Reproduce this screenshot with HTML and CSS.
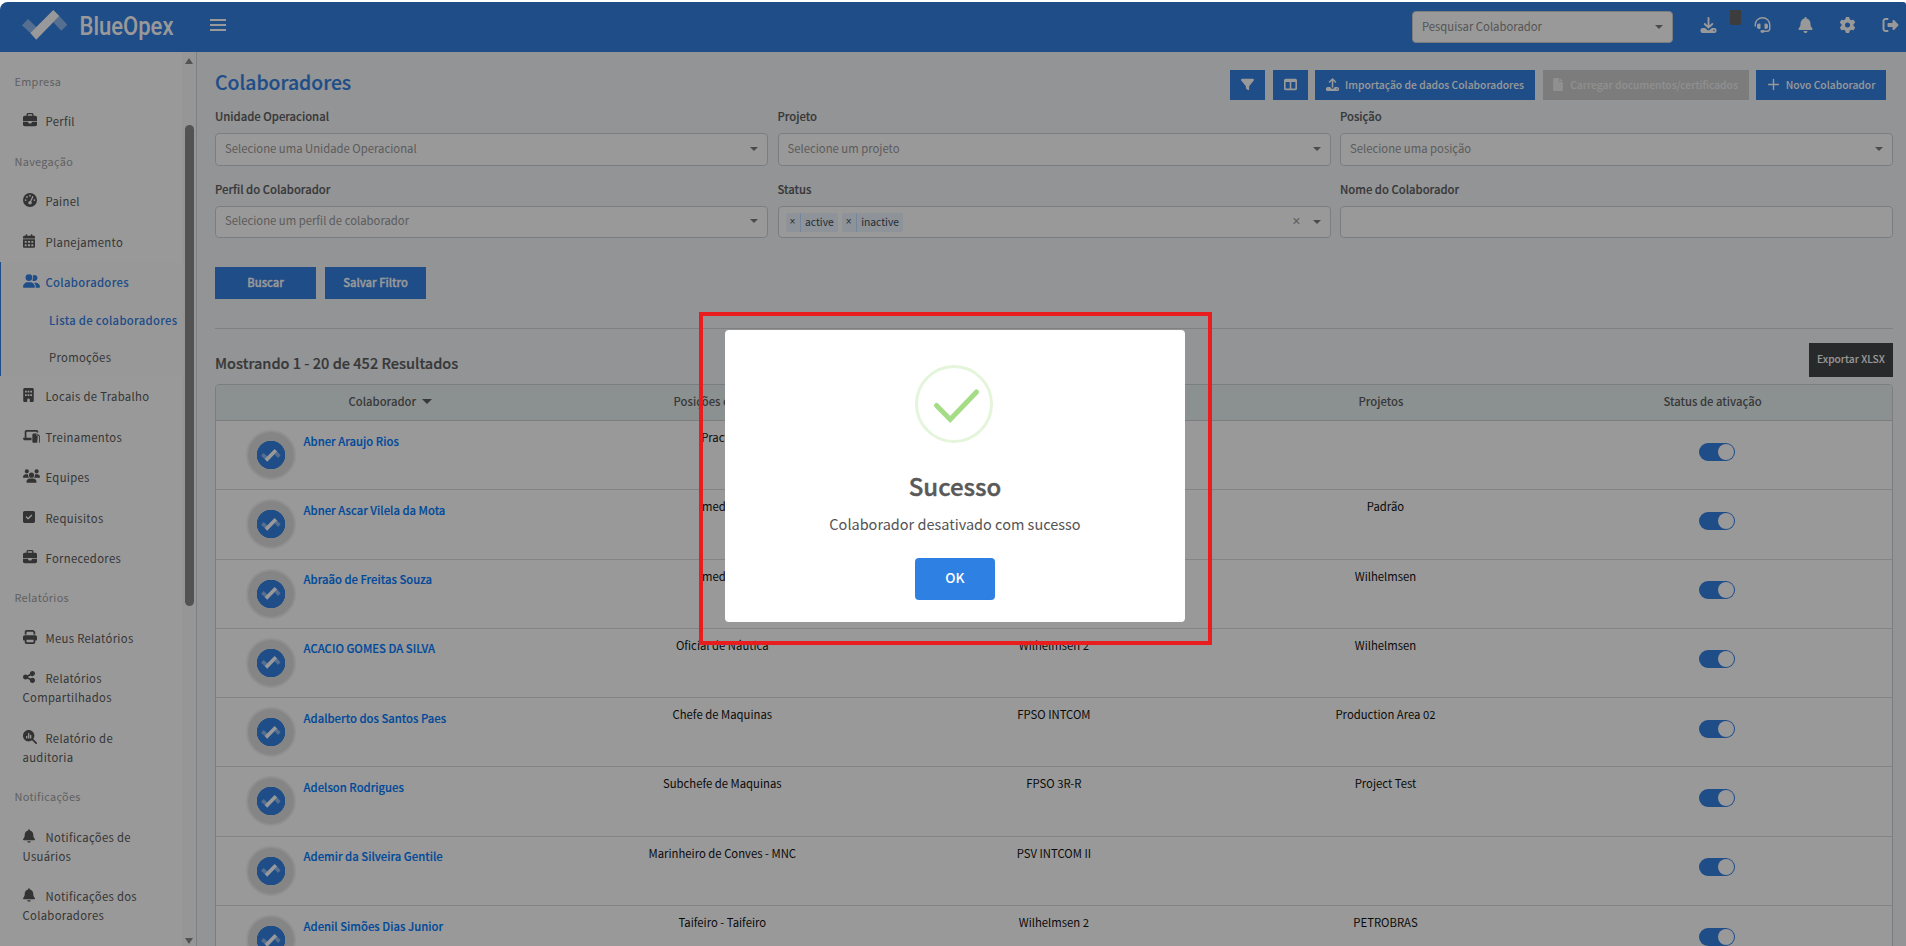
FILE: index.html
```html
<!DOCTYPE html>
<html lang="pt-BR">

<head>
    <meta charset="UTF-8">
    <meta name="viewport" content="width=device-width, initial-scale=1.0">
    <title>BlueOpex - Colaboradores</title>
    <link rel="stylesheet" href="styles.css">
</head>

<body>
    <svg class="sprite">
        <symbol id="i-briefcase" viewBox="0 0 512 512"><path fill-rule="evenodd" d="M184 48h144c4.400 0 8 3.600 8 8v40H176V56c0-4.400 3.600-8 8-8zM128 56v40H64c-35.300 0-64 28.700-64 64v128h512V160c0-35.300-28.700-64-64-64h-64V56c0-31-25-56-56-56H184c-31 0-56 25-56 56zM512 320H320v32c0 17.700-14.300 32-32 32h-64c-17.700 0-32-14.300-32-32v-32H0v96c0 35.300 28.700 64 64 64h384c35.300 0 64-28.700 64-64z"/></symbol>
        <symbol id="i-gauge" viewBox="0 0 512 512"><path fill-rule="evenodd" d="M0 256a256 256 0 1 1 512 0A256 256 0 1 1 0 256zM288 96a32 32 0 1 0-64 0 32 32 0 1 0 64 0zM256 416c35.300 0 64-28.700 64-64 0-16-5.900-30.700-15.700-41.900l74-163c5-12 0-26-12-31s-26 0-31 12l-74 161c-36 0-69.300 28-69.300 63s28.700 64 64 64zM176 144a32 32 0 1 0-64 0 32 32 0 1 0 64 0zM96 288a32 32 0 1 0 0-64 32 32 0 1 0 0 64zm352-32a32 32 0 1 0-64 0 32 32 0 1 0 64 0z"/></symbol>
        <symbol id="i-calendar" viewBox="0 0 448 512"><path fill-rule="evenodd" d="M96 32a32 32 0 0 1 64 0v32h128V32a32 32 0 0 1 64 0v32h48c26 0 48 22 48 48v48H0v-48c0-26 22-48 48-48h48zM0 192h448v272c0 26-22 48-48 48H48c-26 0-48-22-48-48zm64 64v64h72v-64zm120 0v64h80v-64zm128 0v64h72v-64zM64 376v72h72v-72zm120 0v72h80v-72zm128 0v72h72v-72z"/></symbol>
        <symbol id="i-users" viewBox="0 0 640 512"><path d="M96 128a128 128 0 1 1 256 0A128 128 0 1 1 96 128zM0 482.300C0 383.800 79.800 304 178.300 304h91.400C368.200 304 448 383.800 448 482.300c0 16.400-13.300 29.700-29.700 29.700H29.700C13.300 512 0 498.700 0 482.300zM609.300 512H471.400c5.400-9.400 8.600-20.300 8.600-32v-8c0-60.700-27.100-115.200-69.800-151.800c2.400-.1 4.700-.2 7.100-.2h61.400C567.800 320 640 392.200 640 481.300c0 17-13.800 30.700-30.700 30.700zM432 256c-31 0-59-12.600-79.300-32.900C372.400 196.500 384 163.600 384 128c0-26.800-6.600-52.100-18.300-74.300C384.300 40.100 407.200 32 432 32c61.900 0 112 50.100 112 112s-50.100 112-112 112z"/></symbol>
        <symbol id="i-building" viewBox="0 0 384 512"><path fill-rule="evenodd" d="M48 0h288c26 0 48 22 48 48v416c0 26-22 48-48 48h-96v-80a48 48 0 0 0-96 0v80H48c-26 0-48-22-48-48V48C0 22 22 0 48 0zm16 96v64h64V96zm96 0v64h64V96zm96 0v64h64V96zM64 224v64h64v-64zm96 0v64h64v-64zm96 0v64h64v-64z"/></symbol>
        <symbol id="i-laptop" viewBox="0 0 640 512"><path fill-rule="evenodd" d="M128 32c-35 0-64 29-64 64v224H19c-11 0-19 8-19 19 0 42 34 77 77 77h243V320H128V96h384v32h64V96c0-35-29-64-64-64zM400 160h112v96h96v-4 212c0 26-22 48-48 48H400c-26 0-48-22-48-48V208c0-26 22-48 48-48zm144 0l96 96h-96zM560 256h80v208c0 26-22 48-48 48h-60z"/></symbol>
        <symbol id="i-team" viewBox="0 0 640 512"><path d="M144 0a80 80 0 1 1 0 160A80 80 0 1 1 144 0zM512 0a80 80 0 1 1 0 160A80 80 0 1 1 512 0zM0 298.700C0 239.800 47.800 192 106.700 192h42.700c15.900 0 31 3.500 44.600 9.700-1.300 7.200-1.900 14.700-1.900 22.300 0 38.200 16.800 72.500 43.300 96H21.300C9.600 320 0 310.400 0 298.700zM405.300 320h-.7c26.600-23.500 43.300-57.800 43.300-96 0-7.600-.7-15-1.900-22.300 13.600-6.300 28.700-9.700 44.600-9.700h42.700C592.200 192 640 239.800 640 298.700c0 11.800-9.600 21.300-21.300 21.300zM224 224a96 96 0 1 1 192 0 96 96 0 1 1-192 0zM128 485.300C128 411.700 187.700 352 261.300 352h117.400C452.300 352 512 411.700 512 485.300c0 14.700-11.900 26.700-26.700 26.700H154.700c-14.700 0-26.700-11.900-26.700-26.700z"/></symbol>
        <symbol id="i-check" viewBox="0 0 448 512"><path fill-rule="evenodd" d="M64 32C28.700 32 0 60.700 0 96V416c0 35.300 28.700 64 64 64H384c35.300 0 64-28.700 64-64V96c0-35.300-28.700-64-64-64H64zM337 209L209 337c-9.400 9.400-24.600 9.400-33.900 0l-64-64c-9.400-9.400-9.400-24.600 0-33.900s24.600-9.400 33.900 0l47 47L303 175c9.400-9.400 24.600-9.400 33.900 0s9.400 24.600 0 33.900z"/></symbol>
        <symbol id="i-print" viewBox="0 0 512 512"><path d="M128 0C92.700 0 64 28.700 64 64v96h64V64H354.700L384 93.300V160h64V93.300c0-17-6.700-33.300-18.700-45.300L400 18.700C388 6.700 371.700 0 354.700 0H128zM384 352v32 64H128V384 368 352H384zm64 32h32c17.700 0 32-14.300 32-32V256c0-35.300-28.700-64-64-64H64c-35.300 0-64 28.700-64 64v96c0 17.700 14.300 32 32 32H64v64c0 35.300 28.700 64 64 64H384c35.300 0 64-28.700 64-64V384z"/></symbol>
        <symbol id="i-share" viewBox="0 0 448 512"><path d="M352 224c53 0 96-43 96-96s-43-96-96-96s-96 43-96 96c0 4 .2 8 .7 11.900l-94.100 47C145.400 170.200 121.900 160 96 160c-53 0-96 43-96 96s43 96 96 96c25.900 0 49.400-10.200 66.600-26.900l94.100 47c-.5 3.900-.7 7.800-.7 11.900c0 53 43 96 96 96s96-43 96-96s-43-96-96-96c-25.900 0-49.400 10.200-66.600 26.900l-94.100-47c.5-3.900 .7-7.800 .7-11.900s-.2-8-.7-11.900l94.100-47C302.600 213.800 326.100 224 352 224z"/></symbol>
        <symbol id="i-audit" viewBox="0 0 512 512"><path fill-rule="evenodd" d="M416 208c0 45.900-14.900 88.300-40 122.700L502.600 457.400c12.500 12.500 12.500 32.800 0 45.300s-32.800 12.500-45.300 0L330.700 376C296.300 401.200 253.900 416 208 416 93.100 416 0 322.900 0 208S93.100 0 208 0s208 93.100 208 208zM112 232v56a24 24 0 0 0 48 0v-56a24 24 0 0 0-48 0zm72-96v152a24 24 0 0 0 48 0V136a24 24 0 0 0-48 0zm72 64v88a24 24 0 0 0 48 0v-88a24 24 0 0 0-48 0z"/></symbol>
        <symbol id="i-bell" viewBox="0 0 448 512"><path d="M224 0c-17.700 0-32 14.300-32 32V51.200C119 66 64 130.600 64 208v18.800c0 47-17.300 92.400-48.500 127.600l-7.400 8.300c-8.400 9.400-10.400 22.900-5.300 34.400S19.400 416 32 416H416c12.600 0 24-7.400 29.200-18.900s3.100-25-5.300-34.400l-7.400-8.300C401.300 319.200 384 273.900 384 226.800V208c0-77.400-55-142-128-156.800V32c0-17.700-14.300-32-32-32zm45.300 493.300c12-12 18.700-28.300 18.700-45.300H224 160c0 17 6.700 33.300 18.700 45.300s28.300 18.700 45.300 18.700s33.300-6.700 45.300-18.700z"/></symbol>
        <symbol id="i-gear" viewBox="0 0 512 512"><path fill-rule="evenodd" d="M495.900 166.600c3.200 8.700 .5 18.400-6.400 24.600l-43.300 39.400c1.100 8.300 1.700 16.800 1.700 25.400s-.6 17.100-1.700 25.400l43.300 39.400c6.900 6.200 9.600 15.900 6.400 24.600c-4.400 11.900-9.700 23.300-15.800 34.300l-4.700 8.100c-6.600 11-14 21.400-22.100 31.200c-5.900 7.200-15.700 9.600-24.500 6.800l-55.700-17.700c-13.400 10.300-28.200 18.900-44 25.400l-12.500 57.100c-2 9.100-9 16.300-18.200 17.800c-13.800 2.300-28 3.500-42.500 3.500s-28.700-1.200-42.500-3.500c-9.200-1.500-16.200-8.700-18.200-17.800l-12.500-57.100c-15.800-6.500-30.600-15.100-44-25.400L83.100 425.900c-8.800 2.800-18.600 .3-24.500-6.800c-8.100-9.800-15.500-20.200-22.100-31.200l-4.700-8.100c-6.100-11-11.400-22.400-15.800-34.300c-3.200-8.700-.5-18.400 6.400-24.600l43.300-39.400C64.600 273.100 64 264.600 64 256s.6-17.100 1.700-25.400L22.400 191.200c-6.900-6.200-9.600-15.900-6.400-24.600c4.400-11.900 9.700-23.300 15.800-34.300l4.700-8.100c6.600-11 14-21.400 22.100-31.200c5.900-7.200 15.700-9.600 24.500-6.800l55.700 17.700c13.400-10.300 28.200-18.900 44-25.400l12.500-57.100c2-9.100 9-16.300 18.200-17.800C227.300 1.200 241.500 0 256 0s28.700 1.200 42.500 3.500c9.200 1.500 16.200 8.700 18.200 17.800l12.500 57.100c15.800 6.500 30.600 15.100 44 25.400l55.700-17.700c8.800-2.800 18.600-.3 24.500 6.800c8.100 9.800 15.500 20.200 22.100 31.200l4.700 8.100c6.100 11 11.400 22.400 15.800 34.300zM256 336a80 80 0 1 0 0-160 80 80 0 1 0 0 160z"/></symbol>
        <symbol id="i-logout" viewBox="0 0 512 512"><path d="M377.900 105.900L500.700 228.700c7.200 7.200 11.300 17.100 11.300 27.300s-4.100 20.100-11.300 27.300L377.900 406.100c-6.400 6.400-15 9.900-24 9.900c-18.700 0-33.900-15.200-33.900-33.900l0-62.100-128 0c-17.700 0-32-14.300-32-32l0-64c0-17.700 14.300-32 32-32l128 0 0-62.100c0-18.700 15.200-33.900 33.900-33.900c9 0 17.600 3.600 24 9.900zM160 96L96 96c-17.700 0-32 14.300-32 32l0 256c0 17.700 14.300 32 32 32l64 0c17.700 0 32 14.300 32 32s-14.300 32-32 32l-64 0c-53 0-96-43-96-96L0 128C0 75 43 32 96 32l64 0c17.700 0 32 14.300 32 32s-14.300 32-32 32z"/></symbol>
        <symbol id="i-filter" viewBox="0 0 512 512"><path d="M3.900 54.900C10.500 40.900 24.500 32 40 32H472c15.500 0 29.500 8.900 36.100 22.900s4.600 30.500-5.200 42.500L320 320.900V448c0 12.100-6.800 23.200-17.700 28.600s-23.800 4.300-33.500-3l-64-48c-8.100-6-12.800-15.500-12.800-25.600V320.900L9 97.300C-.7 85.400-2.800 68.800 3.900 54.900z"/></symbol>
        <symbol id="i-columns" viewBox="0 0 512 512"><path fill-rule="evenodd" d="M64 32h384c35 0 64 29 64 64v320c0 35-29 64-64 64H64c-35 0-64-29-64-64V96c0-35 29-64 64-64zm0 128v256h160V160zm224 0v256h160V160z"/></symbol>
        <symbol id="i-download" viewBox="0 0 512 512"><path fill-rule="evenodd" d="M64 352h84l63 58c25 23 65 23 90 0l63-58h84c35 0 64 29 64 64v32c0 35-29 64-64 64H64c-35 0-64-29-64-64v-32c0-35 29-64 64-64zm368 56a24 24 0 1 0 0 48 24 24 0 1 0 0-48z"/><path d="M256 32v300M134 224l122 118 122-118" fill="none" stroke="currentColor" stroke-width="60" stroke-linecap="round" stroke-linejoin="round"/></symbol>
        <symbol id="i-upload" viewBox="0 0 512 512"><path fill-rule="evenodd" d="M64 352h112c0 44 36 72 80 72s80-28 80-72h112c35 0 64 29 64 64v32c0 35-29 64-64 64H64c-35 0-64-29-64-64v-32c0-35 29-64 64-64zm368 56a24 24 0 1 0 0 48 24 24 0 1 0 0-48z"/><path d="M256 350V44M138 156L256 40l118 116" fill="none" stroke="currentColor" stroke-width="60" stroke-linecap="round" stroke-linejoin="round"/></symbol>
        <symbol id="i-headset" viewBox="0 0 512 512"><path d="M24 288v-40a232 224 0 0 1 464 0v120c0 50-40 88-88 88H290" fill="none" stroke="currentColor" stroke-width="46" stroke-linecap="round"/><path d="M144 208h16c18 0 32 14 32 32v112c0 18-14 32-32 32h-16c-35 0-64-29-64-64v-48c0-35 29-64 64-64zM368 208h-16c-18 0-32 14-32 32v112c0 18 14 32 32 32h16c35 0 64-29 64-64v-48c0-35-29-64-64-64z"/><rect x="192" y="416" width="128" height="90" rx="42"/></symbol>
        <symbol id="i-file" viewBox="0 0 384 512"><path d="M0 64C0 28.700 28.700 0 64 0h160v128c0 17.700 14.300 32 32 32h128v288c0 35.300-28.700 64-64 64H64c-35.300 0-64-28.700-64-64zM384 128H256V0z"/></symbol>
        <symbol id="i-plus" viewBox="0 0 512 512"><path d="M256 60v392M60 256h392" fill="none" stroke="currentColor" stroke-width="56" stroke-linecap="round"/></symbol>
        <symbol id="i-mark" viewBox="0 0 46 30">
            <path opacity=".45" d="M0 15.300L6 9l8.600 8.300-6.300 5.700zM37.300 6l8 8.700-6 6-8-8.400z"/>
            <path d="M8.300 23L31.300 0l6 6L14.200 29.700z"/>
        </symbol>
    </svg>

    <div class="app">
        <header class="topbar">
            <svg class="logo" viewBox="0 0 156 38">
                <svg x="0" y="4" width="46" height="30" viewBox="0 0 46 30"><use href="#i-mark"/></svg>
                <text x="57.500" y="28.700" textLength="94" lengthAdjust="spacingAndGlyphs">BlueOpex</text>
            </svg>
            <button class="burger"><span></span><span></span><span></span></button>
            <div class="select search">Pesquisar Colaborador<i class="caret"></i></div>
            <nav class="tools">
                <svg class="ico"><use href="#i-download"/></svg>
                <span class="stub"></span>
                <svg class="ico"><use href="#i-headset"/></svg>
                <svg class="ico"><use href="#i-bell"/></svg>
                <svg class="ico"><use href="#i-gear"/></svg>
                <svg class="ico"><use href="#i-logout"/></svg>
            </nav>
        </header>

        <div class="body">
            <aside class="sidebar">
                <nav class="menu">
                    <h6>Empresa</h6>
                    <a class="item"><svg><use href="#i-briefcase"/></svg>Perfil</a>
                    <h6>Navegação</h6>
                    <a class="item"><svg><use href="#i-gauge"/></svg>Painel</a>
                    <a class="item"><svg class="w13"><use href="#i-calendar"/></svg>Planejamento</a>
                    <div class="group">
                        <a class="item active"><svg class="w16"><use href="#i-users"/></svg>Colaboradores</a>
                        <a class="sub active">Lista de colaboradores</a>
                        <a class="sub">Promoções</a>
                    </div>
                    <a class="item"><svg class="w11"><use href="#i-building"/></svg>Locais de Trabalho</a>
                    <a class="item"><svg class="w16"><use href="#i-laptop"/></svg>Treinamentos</a>
                    <a class="item"><svg class="w16"><use href="#i-team"/></svg>Equipes</a>
                    <a class="item"><svg class="w13"><use href="#i-check"/></svg>Requisitos</a>
                    <a class="item"><svg><use href="#i-briefcase"/></svg>Fornecedores</a>
                    <h6>Relatórios</h6>
                    <a class="item"><svg><use href="#i-print"/></svg>Meus Relatórios</a>
                    <a class="item"><svg class="w13"><use href="#i-share"/></svg>Relatórios<br>Compartilhados</a>
                    <a class="item"><svg><use href="#i-audit"/></svg>Relatório de<br>auditoria</a>
                    <h6>Notificações</h6>
                    <a class="item"><svg class="w13"><use href="#i-bell"/></svg>Notificações de<br>Usuários</a>
                    <a class="item"><svg class="w13"><use href="#i-bell"/></svg>Notificações dos<br>Colaboradores</a>
                </nav>
                <div class="scroll">
                    <i class="up"></i>
                    <i class="thumb"></i>
                    <i class="down"></i>
                </div>
            </aside>

            <main class="content">
                <div class="page-head">
                    <h1>Colaboradores</h1>
                    <div class="actions">
                        <button class="btn sq"><svg><use href="#i-filter"/></svg></button>
                        <button class="btn sq"><svg><use href="#i-columns"/></svg></button>
                        <button class="btn import"><svg><use href="#i-upload"/></svg>Importação de dados Colaboradores</button>
                        <button class="btn upload" disabled><svg class="file"><use href="#i-file"/></svg>Carregar documentos/certificados</button>
                        <button class="btn new"><svg><use href="#i-plus"/></svg>Novo Colaborador</button>
                    </div>
                </div>

                <div class="filters">
                    <div class="field"><label>Unidade Operacional</label><div class="select">Selecione uma Unidade Operacional<i class="caret"></i></div></div>
                    <div class="field"><label>Projeto</label><div class="select">Selecione um projeto<i class="caret"></i></div></div>
                    <div class="field"><label>Posição</label><div class="select">Selecione uma posição<i class="caret"></i></div></div>
                    <div class="field"><label>Perfil do Colaborador</label><div class="select">Selecione um perfil de colaborador<i class="caret"></i></div></div>
                    <div class="field"><label>Status</label>
                        <div class="select multi">
                            <span class="tag"><b>×</b>active</span>
                            <span class="tag"><b>×</b>inactive</span>
                            <span class="clear">×</span><i class="caret"></i>
                        </div>
                    </div>
                    <div class="field"><label>Nome do Colaborador</label><div class="select"></div></div>
                </div>

                <div class="submit">
                    <button class="btn">Buscar</button>
                    <button class="btn">Salvar Filtro</button>
                </div>

                <div class="results-head">
                    <h2>Mostrando 1 - 20 de 452 Resultados</h2>
                    <button class="export">Exportar XLSX</button>
                </div>

                <div class="table">
                    <div class="tr th">
                        <div>Colaborador<i class="sort"></i></div>
                        <div>Posições e cargo</div>
                        <div></div>
                        <div>Projetos</div>
                        <div>Status de ativação</div>
                    </div>
                    <div class="tr">
                        <div class="person"><span class="avatar"><svg><use href="#i-mark"/></svg></span><a>Abner Araujo Rios</a></div>
                        <div>Practice</div><div></div><div></div><div><span class="switch"></span></div>
                    </div>
                    <div class="tr">
                        <div class="person"><span class="avatar"><svg><use href="#i-mark"/></svg></span><a>Abner Ascar Vilela da Mota</a></div>
                        <div>Imediato</div><div></div><div>Padrão</div><div><span class="switch"></span></div>
                    </div>
                    <div class="tr">
                        <div class="person"><span class="avatar"><svg><use href="#i-mark"/></svg></span><a>Abraão de Freitas Souza</a></div>
                        <div>Imediato</div><div></div><div>Wilhelmsen</div><div><span class="switch"></span></div>
                    </div>
                    <div class="tr">
                        <div class="person"><span class="avatar"><svg><use href="#i-mark"/></svg></span><a>ACACIO GOMES DA SILVA</a></div>
                        <div>Oficial de Náutica</div><div>Wilhelmsen 2</div><div>Wilhelmsen</div><div><span class="switch"></span></div>
                    </div>
                    <div class="tr">
                        <div class="person"><span class="avatar"><svg><use href="#i-mark"/></svg></span><a>Adalberto dos Santos Paes</a></div>
                        <div>Chefe de Maquinas</div><div>FPSO INTCOM</div><div>Production Area 02</div><div><span class="switch"></span></div>
                    </div>
                    <div class="tr">
                        <div class="person"><span class="avatar"><svg><use href="#i-mark"/></svg></span><a>Adelson Rodrigues</a></div>
                        <div>Subchefe de Maquinas</div><div>FPSO 3R-R</div><div>Project Test</div><div><span class="switch"></span></div>
                    </div>
                    <div class="tr">
                        <div class="person"><span class="avatar"><svg><use href="#i-mark"/></svg></span><a>Ademir da Silveira Gentile</a></div>
                        <div>Marinheiro de Conves - MNC</div><div>PSV INTCOM II</div><div></div><div><span class="switch"></span></div>
                    </div>
                    <div class="tr">
                        <div class="person"><span class="avatar"><svg><use href="#i-mark"/></svg></span><a>Adenil Simões Dias Junior</a></div>
                        <div>Taifeiro - Taifeiro</div><div>Wilhelmsen 2</div><div>PETROBRAS</div><div><span class="switch"></span></div>
                    </div>
                </div>
            </main>
        </div>

        <div class="overlay"></div>
    </div>

    <div class="highlight"></div>
    <div class="modal">
        <svg class="success" viewBox="0 0 80 80">
            <circle cx="39" cy="40" r="37.500" fill="none" stroke="#e4f5db" stroke-width="3"/>
            <path d="M21.500 41.500L35.200 55.500 61.500 28" fill="none" stroke="#a5dc86" stroke-width="5" stroke-linecap="round"/>
        </svg>
        <h3>Sucesso</h3>
        <p>Colaborador desativado com sucesso</p>
        <button>OK</button>
    </div>
</body>

</html>
```
FILE: styles.css
```css
* {
    box-sizing: border-box;
}
body {
    margin: 0;
    height: 946px;
    overflow: hidden;
    background: #fff;
    padding-top: 2px;
    font-family: "Noto Sans CJK JP", "Noto Sans", sans-serif;
    font-size: 11.3px;
    color: #5d5e60;
}
h1, h2, h3, h6, p {
    margin: 0;
}
button {
    font: inherit;
    border: none;
    padding: 0;
}
svg {
    fill: currentColor;
}
.sprite {
    display: none;
}
.app {
    position: relative;
    height: 944px;
    display: flex;
    flex-direction: column;
    border-radius: 8px 3px 0 0;
    overflow: hidden;
}
.overlay {
    position: absolute;
    inset: 0;
    background: rgba(0, 0, 0, 0.4);
}

/* topbar */
.topbar {
    height: 50px;
    flex: none;
    display: flex;
    align-items: center;
    background: #3380e3;
    color: #fff;
    padding: 0 7px 4px 22px;
}
.logo {
    width: 156px;
    height: 38px;
    overflow: visible;
}
.logo text {
    font: 500 25px Roboto, sans-serif;
}
.burger {
    width: 16px;
    margin-left: 32px;
    background: none;
    display: flex;
    flex-direction: column;
    gap: 3px;
}
.burger span {
    height: 2px;
    background: #fff;
}
.select {
    height: 32px;
    display: flex;
    align-items: center;
    background: #fff;
    border: 1px solid #cfd1d4;
    border-radius: 4px;
    color: #9a9a9a;
    padding: 0 9px 4px 9px;
}
.select.search {
    width: 261px;
    margin-left: auto;
    margin-top: 4px;
    color: #8e8e8e;
    padding-bottom: 3px;
}
.caret {
    margin-left: auto;
    border: 4px solid transparent;
    border-top: 4px solid #7e7e7e;
    border-bottom: none;
    position: relative;
    top: 1px;
}
.tools {
    display: flex;
    align-items: center;
    margin-left: 27px;
}
.ico {
    width: 17px;
    height: 16px;
    margin-right: 25.7px;
}
.ico:first-child {
    margin-right: 13px;
}
.ico:last-child {
    margin-right: 0;
}
.stub {
    width: 11px;
    height: 15px;
    margin: -16px 13px 0 0;
    background: #666;
    border-radius: 0 0 2px 2px;
}

/* sidebar */
.body {
    flex: 1;
    display: flex;
    min-height: 0;
}
.sidebar {
    width: 197px;
    flex: none;
    display: flex;
    background: #fff;
    border-right: 1px solid #d4d5d8;
}
.menu {
    width: 182px;
    padding-top: 9.7px;
    line-height: 19px;
    letter-spacing: 0.31px;
    color: #5a5a5a;
    white-space: nowrap;
}
.menu h6 {
    height: 39.6px;
    padding: 10px 0 0 14.5px;
    font-size: 10.9px;
    font-weight: 400;
    color: #9fa1a3;
}
.item {
    display: block;
    padding: 11px 0 10.4px 22.5px;
}
.group {
    border-left: 1px solid #3380e3;
    background: #fdfdfd;
}
.group .item {
    padding: 10.5px 0 10px 21.5px;
}
.item svg {
    width: 14px;
    height: 14px;
    margin-right: 9px;
    vertical-align: -1px;
    color: #555;
}
.item .w11 {
    width: 11px;
    margin-right: 12px;
}
.item .w13 {
    width: 12px;
    margin-right: 11px;
}
.item .w16 {
    width: 17px;
    margin-right: 6px;
}
.sub {
    display: block;
    height: 37.4px;
    padding: 9.5px 0 0 48px;
}
.active, .item.active svg {
    color: #3380e3;
    font-weight: 500;
}
.scroll {
    width: 14px;
    background: #fafafa;
    display: flex;
    flex-direction: column;
    align-items: center;
    padding: 6px 0 2px;
}
.up, .down {
    border: 4px solid transparent;
}
.up {
    border-bottom: 6px solid #8b8b8b;
    border-top: none;
}
.down {
    border-top: 6px solid #8b8b8b;
    border-bottom: none;
    margin-top: auto;
}
.thumb {
    width: 9px;
    height: 481px;
    margin-top: 61px;
    border-radius: 5px;
    background: #8b8b8b;
}

/* content */
.content {
    flex: 1;
    min-width: 0;
    background: #f5f7fa;
    padding: 18px 13px 0 18px;
}
.page-head {
    display: flex;
    justify-content: space-between;
    height: 34px;
}
h1 {
    font-size: 19.4px;
    font-weight: 500;
    line-height: 24px;
    color: #3380e3;
    -webkit-text-stroke: 0.2px;
}
.actions {
    display: flex;
    gap: 7.5px;
    margin-right: 7px;
}
.btn {
    height: 30px;
    display: flex;
    align-items: center;
    justify-content: center;
    background: #3380e3;
    color: #fff;
    font-size: 10.3px;
    font-weight: 500;
    white-space: nowrap;
    padding-bottom: 2px;
}
.btn svg {
    width: 13px;
    height: 13px;
    margin-right: 6px;
}
.btn .file {
    width: 10px;
    margin-right: 7px;
}
.sq {
    width: 35px;
}
.btn.sq svg {
    margin: 0;
}
.import {
    width: 220px;
}
.upload {
    width: 206px;
    background: #cfcfcf;
    color: #f0f0f0;
}
.new {
    width: 130px;
}
.filters {
    display: grid;
    grid-template-columns: repeat(3, 1fr);
    gap: 14px 9.5px;
}
label {
    display: block;
    height: 29px;
    line-height: 24px;
    font-weight: 500;
    color: #5d5e60;
    -webkit-text-stroke: 0.15px;
}
.field {
    height: 59px;
}
.field:nth-child(-n+3) .select {
    height: 33px;
}
.select.multi {
    padding: 0 9px 0 7px;
}
.tag {
    height: 19px;
    display: flex;
    align-items: center;
    background: #ebf5ff;
    border-radius: 2px;
    margin-right: 4px;
    padding: 0 4px 1px 0;
    color: #3f4a55;
    font-size: 10.3px;
}
.tag b {
    width: 15px;
    height: 19px;
    margin: 1px 4.5px 0 0;
    text-align: center;
    font: 10px/18px "Liberation Sans", sans-serif;
    border-right: 1px solid #c2e0ff;
}
.clear {
    margin-left: auto;
    font: 14px "Liberation Sans", sans-serif;
    padding-bottom: 2px;
}
.multi .caret {
    margin-left: 12px;
    top: 0;
}
.submit {
    display: flex;
    gap: 9px;
    margin-top: 31px;
    padding-bottom: 29px;
    border-bottom: 1px solid #d4d5d8;
}
.submit .btn {
    width: 101px;
    height: 32px;
    font-size: 11.2px;
    -webkit-text-stroke: 0.3px;
}
.results-head {
    display: flex;
    justify-content: space-between;
    height: 55px;
    padding-top: 14px;
}
h2 {
    font-size: 14.55px;
    font-weight: 500;
    line-height: 40px;
    color: #5d5e60;
    -webkit-text-stroke: 0.2px;
}
.export {
    width: 84px;
    height: 34px;
    background: #444547;
    color: #fff;
    font-size: 10.2px;
    font-weight: 500;
    padding-bottom: 3px;
}
.table {
    border: 1px solid #cfd1d4;
    border-radius: 4px 4px 0 0;
    background: #fff;
    overflow: hidden;
}
.tr {
    display: grid;
    grid-template-columns: 340.5px repeat(4, 331.6px);
    height: 69.3px;
    border-bottom: 1px solid #dcdcdc;
    text-align: center;
    line-height: 18px;
    color: #111;
}
.tr > div {
    padding-top: 7px;
}
.th {
    height: 36px;
    background: #e8f0f0;
    font-weight: 500;
    color: #5d5e60;
    border-color: #cfd1d4;
}
.th > div {
    padding: 7px 9px 0 0;
}
.th > div:first-child {
    padding: 7px 0 0 8px;
}
.sort {
    display: inline-block;
    margin-left: 6px;
    border: 5px solid transparent;
    border-top-color: #5d5e60;
    border-bottom: none;
    vertical-align: 2px;
}
.tr .person {
    display: flex;
    padding: 9px 0 0 30px;
    text-align: left;
    font-weight: 500;
    color: #007bff;
    -webkit-text-stroke: 0.15px;
}
.person a {
    margin: 1.5px 0 0 7.5px;
}
.avatar {
    width: 50px;
    height: 50px;
    border-radius: 50%;
    border: 2px solid #f0f0f0;
    background: radial-gradient(circle, #3380e3 14px, #dedede 14.5px);
    display: flex;
    align-items: center;
    justify-content: center;
    color: #fff;
}
.avatar svg {
    width: 20px;
    height: 13px;
}
.switch {
    display: block;
    width: 36px;
    height: 18px;
    margin: 14.5px auto 0;
    padding: 1px;
    border-radius: 9px;
    background: #3380e3;
}
.switch::after {
    content: "";
    display: block;
    width: 16px;
    height: 16px;
    margin-left: auto;
    border-radius: 50%;
    background: #fff;
}

/* modal */
.highlight {
    position: absolute;
    left: 699px;
    top: 312px;
    width: 513px;
    height: 333px;
    border: 4px solid #e91d1d;
}
.modal {
    position: absolute;
    left: 725px;
    top: 330px;
    width: 460px;
    height: 292px;
    display: flex;
    flex-direction: column;
    align-items: center;
    background: #fff;
    border-radius: 4px;
    padding-top: 34px;
}
.success {
    width: 80px;
    height: 80px;
}
h3 {
    margin-top: 24px;
    font-size: 24px;
    font-weight: 500;
    line-height: 36px;
    color: #595959;
    -webkit-text-stroke: 0.4px;
}
.modal p {
    margin-top: 7px;
    font-size: 14.5px;
    line-height: 25px;
    color: #545454;
}
.modal button {
    width: 80px;
    height: 42px;
    margin-top: 22px;
    padding-bottom: 4px;
    border-radius: 4px;
    background: #2f80e3;
    color: #fff;
    font-size: 13.6px;
    font-weight: 500;
}
```
